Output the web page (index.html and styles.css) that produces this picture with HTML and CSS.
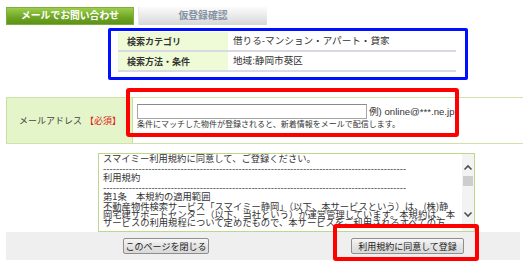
FILE: index.html
```html
<!DOCTYPE html>
<html lang="ja">
<head>
<meta charset="utf-8">
<link rel="stylesheet" href="styles.css">
</head>
<body>
<div class="page">
  <div class="tabs">
    <div class="tab tab-active">メールでお問い合わせ</div>
    <div class="tab tab-next">仮登録確認</div>
  </div>

  <div class="summary">
    <div class="srow">
      <div class="slabel">検索カテゴリ</div>
      <div class="svalue">借りる-マンション・アパート・貸家</div>
    </div>
    <div class="srow">
      <div class="slabel">検索方法・条件</div>
      <div class="svalue">地域:静岡市葵区</div>
    </div>
  </div>

  <div class="mailrow">
    <div class="maillabel"><span>メールアドレス</span><span class="req">【必須】</span></div>
    <div class="mailvalue">
      <div class="inputline"><span class="input"></span><span class="example">例) online@***.ne.jp</span></div>
      <div class="note">条件にマッチした物件が登録されると、新着情報をメールで配信します。</div>
    </div>
  </div>

  <div class="terms">
    <div class="termsbox">
      <div class="termstext"><div>スマイミー利用規約に同意して、ご登録ください。</div><div class="dash">----------------------------------------------------------------------------------------------------</div><div>利用規約</div><div class="dash">----------------------------------------------------------------------------------------------------</div><div>第1条　本規約の適用範囲</div><div class="tight">不動産物件検索サービス「スマイミー静岡」（以下、本サービスという）は、(株)静</div><div class="tight">岡宅建サポートセンター（以下、当社という）が運営管理しています。本規約は、本</div><div class="tight">サービスの利用規程について定めたもので、本サービスをご利用されるすべての方</div></div>
      <div class="scrollbar">
        <svg class="arrow" width="12" height="12" viewBox="0 0 12 12"><path d="M2.5 7.5 L6 4 L9.5 7.5" fill="none" stroke="#505050" stroke-width="1.6"/></svg>
        <div class="thumb"></div>
        <div class="track"></div>
        <svg class="arrow" width="12" height="12" viewBox="0 0 12 12"><path d="M2.5 4.5 L6 8 L9.5 4.5" fill="none" stroke="#505050" stroke-width="1.6"/></svg>
      </div>
    </div>
  </div>

  <div class="actions">
    <button class="btn btn-close">このページを閉じる</button>
    <button class="btn btn-agree">利用規約に同意して登録</button>
  </div>

  <div class="mark mark-mail"></div>
  <div class="mark mark-agree"></div>
</div>
</body>
</html>
```

FILE: styles.css
```css
html, body {
  margin: 0;
  padding: 0;
  background: #ffffff;
}
body {
  font-family: "Noto Sans CJK JP", "Noto Sans", sans-serif;
  color: #333333;
}
.page {
  position: relative;
  width: 530px;
  height: 265px;
  padding: 7px 0 0 6px;
  box-sizing: border-box;
  overflow: hidden;
}

/* tabs */
.tabs {
  display: flex;
  gap: 4px;
  height: 18px;
}
.tab {
  display: flex;
  align-items: center;
  justify-content: center;
  font-size: 9.8px;
  font-weight: bold;
  line-height: 1;
}
.tab-active {
  width: 128px;
  color: #ffffff;
  background: linear-gradient(#9ccd4c, #6ea424 60%, #5c9216);
  border: 1px solid #7fae3a;
  box-sizing: border-box;
}
.tab-next {
  width: 129px;
  color: #8493a2;
  background: linear-gradient(#fbfbfb, #e6e6e6 60%, #d6d6d6);
  border-left: 1px solid #e8e8e8;
  box-sizing: border-box;
}

/* search summary (blue annotation frame) */
.summary {
  margin: 3px 0 0 102px;
  width: 360px;
  box-sizing: border-box;
  border: 3px solid #0010ff;
  border-radius: 2px;
  padding: 1px 9px 5px 7px;
}
.srow {
  display: flex;
  height: 18px;
  border-bottom: 2px solid #d9d9e6;
  font-size: 9.6px;
  line-height: 1;
}
.slabel {
  width: 110px;
  background: #effad6;
  display: flex;
  align-items: center;
  padding-left: 9px;
  box-sizing: border-box;
  font-weight: bold;
  font-size: 9px;
  color: #333333;
}
.svalue {
  flex: 1;
  display: flex;
  align-items: center;
  padding-left: 4px;
  border-left: 1px solid #ffffff;
  color: #333333;
}

/* mail row */
.mailrow {
  display: flex;
  margin-top: 17px;
  width: 517px;
  height: 47px;
  box-sizing: border-box;
  border-top: 1px solid #cfe2ac;
  border-bottom: 1px solid #cfe2ac;
}
.maillabel {
  width: 127px;
  box-sizing: border-box;
  background: #e4f6c9;
  border-left: 1px solid #c8dea2;
  border-right: 1px solid #c8dea2;
  display: flex;
  align-items: center;
  padding: 0 0 0 12px;
  font-size: 9px;
  color: #444444;
  white-space: nowrap;
}
.req {
  color: #e02020;
  margin-left: 3px;
}
.mailvalue {
  flex: 1;
  padding: 6px 0 0 4px;
}
.inputline {
  display: flex;
  align-items: center;
  height: 15px;
}
.input {
  display: block;
  width: 230px;
  height: 15px;
  box-sizing: border-box;
  border: 1px solid #a5a5a5;
  border-top-color: #8a8a8a;
  background: #ffffff;
}
.example {
  margin-left: 2px;
  font-family: "Liberation Sans", "Noto Sans CJK JP", sans-serif;
  font-size: 9.6px;
  line-height: 1;
  color: #333333;
}
.note {
  margin-top: 0;
  font-size: 8px;
  line-height: 9px;
  color: #333333;
}

/* terms */
.terms {
  margin: 9px 0 0 92px;
}
.termsbox {
  width: 377px;
  height: 79px;
  box-sizing: border-box;
  border: 1px solid #bcd88e;
  display: flex;
  background: #ffffff;
}
.termstext {
  flex: 1;
  overflow: hidden;
  padding: 0 0 0 4px;
  font-size: 9.3px;
  white-space: nowrap;
  color: #333333;
}
.termstext > div {
  height: 9.5px;
  line-height: 9.5px;
}
.termstext > div.tight {
  height: 8px;
  line-height: 8px;
}
.dash {
  width: 303px;
  overflow: hidden;
}
.scrollbar {
  width: 12px;
  display: flex;
  flex-direction: column;
  background: #f3f3f3;
  padding-top: 8px;
}
.arrow {
  display: block;
  flex: none;
}
.thumb {
  height: 10px;
  margin: 2px 1px 0;
  background: #cdcdcd;
}
.track {
  flex: none;
  height: 22px;
}

/* actions */
.actions {
  display: flex;
  align-items: center;
  width: 514px;
  height: 28px;
  background: #efefef;
  padding-left: 117px;
  box-sizing: border-box;
}
.btn {
  font-family: "Noto Sans CJK JP", sans-serif;
  font-size: 9px;
  line-height: 1;
  color: #222222;
  height: 16px;
  padding: 0;
  border: 1px solid #8e8e8e;
  border-radius: 2px;
  background: linear-gradient(#f6f6f6, #e4e4e4 50%, #d9d9d9);
  box-sizing: border-box;
  margin: 0;
  white-space: nowrap;
}
.btn-close {
  width: 86px;
}
.btn-agree {
  width: 113px;
  margin-left: 142px;
}

/* red annotation frames */
.mark {
  position: absolute;
  border: 4px solid #ff0000;
  border-radius: 3px;
  box-sizing: border-box;
}
.mark-mail {
  left: 126px;
  top: 88px;
  width: 333px;
  height: 49px;
}
.mark-agree {
  left: 333px;
  top: 224px;
  width: 146px;
  height: 37px;
}
```
